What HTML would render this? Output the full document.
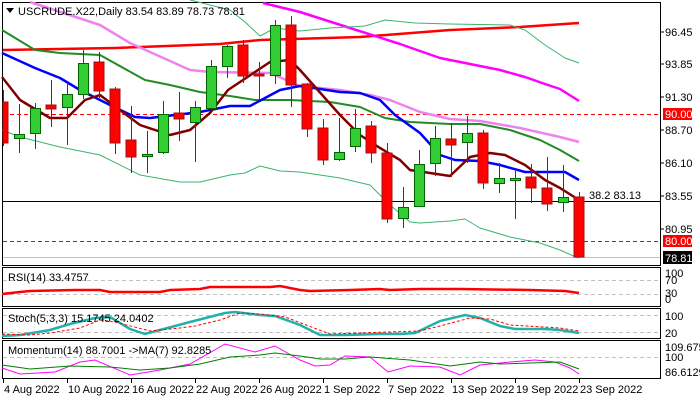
<!DOCTYPE html>
<html><head><meta charset="utf-8"><style>
html,body{margin:0;padding:0;background:#fff;width:700px;height:400px;overflow:hidden}
svg{display:block;font-family:"Liberation Sans",sans-serif;font-size:11px}
</style></head><body>
<svg width="700" height="400" viewBox="0 0 700 400" xmlns="http://www.w3.org/2000/svg">
<rect width="700" height="400" fill="#fff"/>
<!-- panel frames -->
<g fill="none" stroke="#000" stroke-width="1">
<rect x="2.5" y="2.5" width="658" height="263"/>
<rect x="2.5" y="267.5" width="658" height="39"/>
<rect x="2.5" y="308.5" width="658" height="30"/>
<rect x="2.5" y="340.5" width="658" height="38"/>
</g>
<!-- horizontal levels -->
<line x1="3" y1="114.5" x2="660" y2="114.5" stroke="#f00" stroke-dasharray="4,3"/>
<line x1="3" y1="241.5" x2="660" y2="241.5" stroke="#f00" stroke-dasharray="4,3"/>
<line x1="3" y1="257.5" x2="660" y2="257.5" stroke="#c0c0c0"/>
<line x1="3" y1="201.5" x2="660" y2="201.5" stroke="#000"/>
<text x="589" y="199" fill="#000">38.2 83.13</text>
<!-- MAs -->
<g fill="none" stroke-linejoin="round">
<polyline stroke="#f00" stroke-width="2.5" points="3,50 115,48 220,44 260,40 360,37 450,30 520,27 579,23"/>
<polyline stroke="#f0f" stroke-width="2.5" points="263,3 300,12 350,28 400,44 440,58 500,70 525,77 545,84 560,89 579,101"/>
<polyline stroke="#ee82ee" stroke-width="2.5" points="30,2 100,25 130,43 190,70 210,72 270,73 300,86 340,90 370,95 390,100 420,112 450,119 480,121 520,128 560,137 579,142"/>
<polyline stroke="#228b22" stroke-width="2" points="2,30 35,50 60,53 100,55 145,80 170,85 200,92 230,96 255,100 290,100 330,102 360,107 385,118 410,122 450,124 480,124 510,130 540,140 560,150 579,161"/>
<polyline stroke="#00f" stroke-width="2.5" points="2,53 35,68 60,78 80,90 110,105 135,117 150,118 175,115 200,112 230,106 250,106 265,98 280,90 300,86 340,92 360,93 380,100 395,115 420,133 440,155 455,160 480,161 500,165 525,172 565,172 579,180"/>
<polyline stroke="#800000" stroke-width="2.5" points="2,77 20,100 50,118 67,118 85,100 100,95 140,125 170,135 190,130 210,113 228,90 270,62 290,60 300,70 340,115 360,135 380,148 400,160 410,170 430,173 450,176 470,157 490,153 505,155 525,165 545,180 560,188 579,200"/>
<polyline stroke="#3cb371" stroke-width="1" points="190,0 230,10 245,22 260,36 275,28 300,31 330,28 365,26 385,20 415,23 450,24 510,25 525,30 545,45 565,58 579,63"/>
<polyline stroke="#3cb371" stroke-width="1" points="2,130 20,137 60,147 100,155 140,175 180,182 200,182 230,175 245,173 260,166 280,171 300,172 340,178 370,185 390,205 410,222 420,223 450,221 465,219 480,228 510,237 540,243 560,250 578,258"/>
</g>
<!-- candles -->
<g id="c" stroke-width="1"></g>
<!-- title -->
<path d="M6 8 L14 8 L10 13 Z" fill="#000"/>
<text x="18" y="15" fill="#000">USCRUDE.X22,Daily  83.54 83.89 78.73 78.81</text>
<!-- right axis labels -->
<g fill="#000">
<line x1="661" y1="32" x2="664" y2="32" stroke="#000"/><text x="665" y="36">96.45</text>
<line x1="661" y1="64" x2="664" y2="64" stroke="#000"/><text x="665" y="68">93.85</text>
<line x1="661" y1="97" x2="664" y2="97" stroke="#000"/><text x="665" y="101">91.30</text>
<line x1="661" y1="130" x2="664" y2="130" stroke="#000"/><text x="665" y="134">88.70</text>
<line x1="661" y1="163" x2="664" y2="163" stroke="#000"/><text x="665" y="167">86.10</text>
<line x1="661" y1="196" x2="664" y2="196" stroke="#000"/><text x="665" y="200">83.55</text>
<line x1="661" y1="229" x2="664" y2="229" stroke="#000"/><text x="665" y="233">80.95</text>
</g>
<rect x="663" y="235" width="29" height="12" fill="#f00"/><text x="665" y="245" fill="#fff">80.00</text>
<rect x="663" y="108" width="29" height="12" fill="#f00"/><text x="665" y="118" fill="#fff">90.00</text>
<rect x="663" y="251" width="29" height="13" fill="#000"/><text x="665" y="262" fill="#fff">78.81</text>
<!-- RSI -->
<line x1="3" y1="280.5" x2="660" y2="280.5" stroke="#c0c0c0" stroke-dasharray="4,3"/>
<line x1="3" y1="294.5" x2="660" y2="294.5" stroke="#c0c0c0" stroke-dasharray="4,3"/>
<text x="8" y="281" fill="#000">RSI(14) 33.4757</text>
<polyline fill="none" stroke="#f00" stroke-width="2.5" points="2,294 20,292 30,291 75,290 100,290 110,292 160,292 170,290 200,289 210,287 270,287 280,286 290,288 300,290 310,291 350,290 380,289 390,290 420,289 460,289 530,290 565,291 579,293"/>
<text x="665" y="277" fill="#000">100</text><text x="665" y="284" fill="#000">70</text><text x="665" y="297" fill="#000">30</text><text x="665" y="303" fill="#000">0</text>
<!-- Stoch -->
<line x1="3" y1="315.5" x2="660" y2="315.5" stroke="#c0c0c0" stroke-dasharray="4,3"/>
<line x1="3" y1="332.5" x2="660" y2="332.5" stroke="#c0c0c0" stroke-dasharray="4,3"/>
<polyline fill="none" stroke="#20b2aa" stroke-width="2.5" points="2,336 20,335 50,330 70,324 95,318 110,317 130,329 145,334 160,330 190,322 225,313 235,312 260,315 275,316 300,325 320,335 345,335 380,334 400,334 415,333 440,321 465,315 480,318 500,326 515,329 545,329 560,330 579,333"/>
<polyline fill="none" stroke="#f00" stroke-width="1" stroke-dasharray="3,2" points="2,334 30,335 50,333 80,328 100,320 115,322 150,331 180,328 195,326 220,320 240,313 260,314 285,317 330,334 420,331 440,326 470,318 490,319 510,325 560,328 579,331"/>
<text x="8" y="322" fill="#000">Stoch(5,3,3) 15.1745 24.0402</text>
<text x="665" y="320" fill="#000">100</text><text x="665" y="337" fill="#000">20</text>
<!-- Momentum -->
<line x1="3" y1="357.5" x2="660" y2="357.5" stroke="#c0c0c0" stroke-dasharray="4,3"/>
<polyline fill="none" stroke="#f0f" stroke-width="1" points="2,368 20,374 55,372 80,362 95,360 130,375 160,370 190,364 225,344 255,352 275,346 300,360 315,366 330,365 345,356 370,357 388,372 410,366 440,367 460,375 480,365 510,362 535,360 555,362 570,368 579,374"/>
<polyline fill="none" stroke="#008000" stroke-width="1" points="2,365 30,369 70,366 110,367 140,370 170,368 200,364 230,357 260,355 275,353 300,356 320,359 345,359 370,357 410,360 450,366 480,362 500,364 560,362 579,369"/>
<text x="8" y="354" fill="#000">Momentum(14) 88.7001  -&gt;MA(7) 92.8285</text>
<text x="665" y="351" fill="#000">109.6751</text><text x="665" y="361" fill="#000">100</text><text x="665" y="376" fill="#000">86.6129</text>
<!-- date axis -->
<g stroke="#000">
<line x1="3.5" y1="379" x2="3.5" y2="383"/><line x1="67.5" y1="379" x2="67.5" y2="383"/><line x1="131.5" y1="379" x2="131.5" y2="383"/><line x1="195.5" y1="379" x2="195.5" y2="383"/><line x1="259.5" y1="379" x2="259.5" y2="383"/><line x1="323.5" y1="379" x2="323.5" y2="383"/><line x1="387.5" y1="379" x2="387.5" y2="383"/><line x1="451.5" y1="379" x2="451.5" y2="383"/><line x1="515.5" y1="379" x2="515.5" y2="383"/><line x1="579.5" y1="379" x2="579.5" y2="383"/>
</g>
<g fill="#000">
<text x="4" y="393">4 Aug 2022</text><text x="68" y="393">10 Aug 2022</text><text x="132" y="393">16 Aug 2022</text><text x="196" y="393">22 Aug 2022</text><text x="260" y="393">26 Aug 2022</text><text x="324" y="393">1 Sep 2022</text><text x="388" y="393">7 Sep 2022</text><text x="452" y="393">13 Sep 2022</text><text x="516" y="393">19 Sep 2022</text><text x="580" y="393">23 Sep 2022</text>
</g>
<!-- candles drawn statically -->
<g stroke-width="1">
<!-- format: wick line, body rect -->
<g stroke="#a01010" fill="#f00">
<line x1="3.5" y1="90" x2="3.5" y2="146"/><rect x="3" y="102" width="5" height="41"/>
<line x1="51.5" y1="80" x2="51.5" y2="127"/><rect x="46" y="105" width="10" height="4"/>
<line x1="99.5" y1="52" x2="99.5" y2="98"/><rect x="94" y="62" width="10" height="29"/>
<line x1="115.5" y1="87" x2="115.5" y2="154"/><rect x="110" y="89" width="10" height="54"/>
<line x1="131.5" y1="106" x2="131.5" y2="173"/><rect x="126" y="140" width="10" height="17"/>
<line x1="179.5" y1="92" x2="179.5" y2="141"/><rect x="174" y="113" width="10" height="6"/>
<line x1="243.5" y1="40" x2="243.5" y2="83"/><rect x="238" y="45" width="10" height="31"/>
<line x1="259.5" y1="62" x2="259.5" y2="100"/><rect x="254" y="74" width="10" height="2"/>
<line x1="291.5" y1="16" x2="291.5" y2="107"/><rect x="286" y="25" width="10" height="60"/>
<line x1="307.5" y1="83" x2="307.5" y2="137"/><rect x="302" y="84" width="10" height="45"/>
<line x1="323.5" y1="119" x2="323.5" y2="165"/><rect x="318" y="128" width="10" height="32"/>
<line x1="371.5" y1="121" x2="371.5" y2="163"/><rect x="366" y="126" width="10" height="27"/>
<line x1="387.5" y1="143" x2="387.5" y2="223"/><rect x="382" y="153" width="10" height="66"/>
<line x1="451.5" y1="123" x2="451.5" y2="177"/><rect x="446" y="139" width="10" height="6"/>
<line x1="483.5" y1="130" x2="483.5" y2="189"/><rect x="478" y="133" width="10" height="50"/>
<line x1="531.5" y1="164" x2="531.5" y2="203"/><rect x="526" y="177" width="10" height="11"/>
<line x1="547.5" y1="157" x2="547.5" y2="211"/><rect x="542" y="188" width="10" height="16"/>
<line x1="579.5" y1="192" x2="579.5" y2="258"/><rect x="574" y="197" width="10" height="60"/>
</g>
<g stroke="#006400" fill="#32cd32">
<line x1="19.5" y1="104" x2="19.5" y2="153"/><rect x="14.5" y="134.5" width="10" height="4"/>
<line x1="35.5" y1="103" x2="35.5" y2="149"/><rect x="30.5" y="108.5" width="10" height="25"/>
<line x1="67.5" y1="83" x2="67.5" y2="145"/><rect x="62.5" y="94.5" width="10" height="13"/>
<line x1="83.5" y1="50" x2="83.5" y2="99"/><rect x="78.5" y="63.5" width="10" height="31"/>
<line x1="147.5" y1="131" x2="147.5" y2="173"/><rect x="142.5" y="154.5" width="10" height="2"/>
<line x1="163.5" y1="101" x2="163.5" y2="154"/><rect x="158.5" y="114.5" width="10" height="38"/>
<line x1="195.5" y1="101" x2="195.5" y2="162"/><rect x="190.5" y="107.5" width="10" height="15"/>
<line x1="211.5" y1="60" x2="211.5" y2="110"/><rect x="206.5" y="66.5" width="10" height="42"/>
<line x1="227.5" y1="45" x2="227.5" y2="78"/><rect x="222.5" y="46.5" width="10" height="20"/>
<line x1="275.5" y1="20" x2="275.5" y2="84"/><rect x="270.5" y="25.5" width="10" height="50"/>
<line x1="339.5" y1="118" x2="339.5" y2="161"/><rect x="334.5" y="152.5" width="10" height="7"/>
<line x1="355.5" y1="109" x2="355.5" y2="152"/><rect x="350.5" y="128.5" width="10" height="18"/>
<line x1="403.5" y1="187" x2="403.5" y2="228"/><rect x="398.5" y="207.5" width="10" height="11"/>
<line x1="419.5" y1="150" x2="419.5" y2="207"/><rect x="414.5" y="164.5" width="10" height="42"/>
<line x1="435.5" y1="126" x2="435.5" y2="176"/><rect x="430.5" y="138.5" width="10" height="25"/>
<line x1="467.5" y1="116" x2="467.5" y2="163"/><rect x="462.5" y="133.5" width="10" height="9"/>
<line x1="499.5" y1="163" x2="499.5" y2="193"/><rect x="494.5" y="178.5" width="10" height="5"/>
<line x1="515.5" y1="171" x2="515.5" y2="219"/><rect x="510.5" y="178.5" width="10" height="2"/>
<line x1="563.5" y1="165" x2="563.5" y2="212"/><rect x="558.5" y="197.5" width="10" height="5"/>
</g>
</g>
</svg>
</body></html>
